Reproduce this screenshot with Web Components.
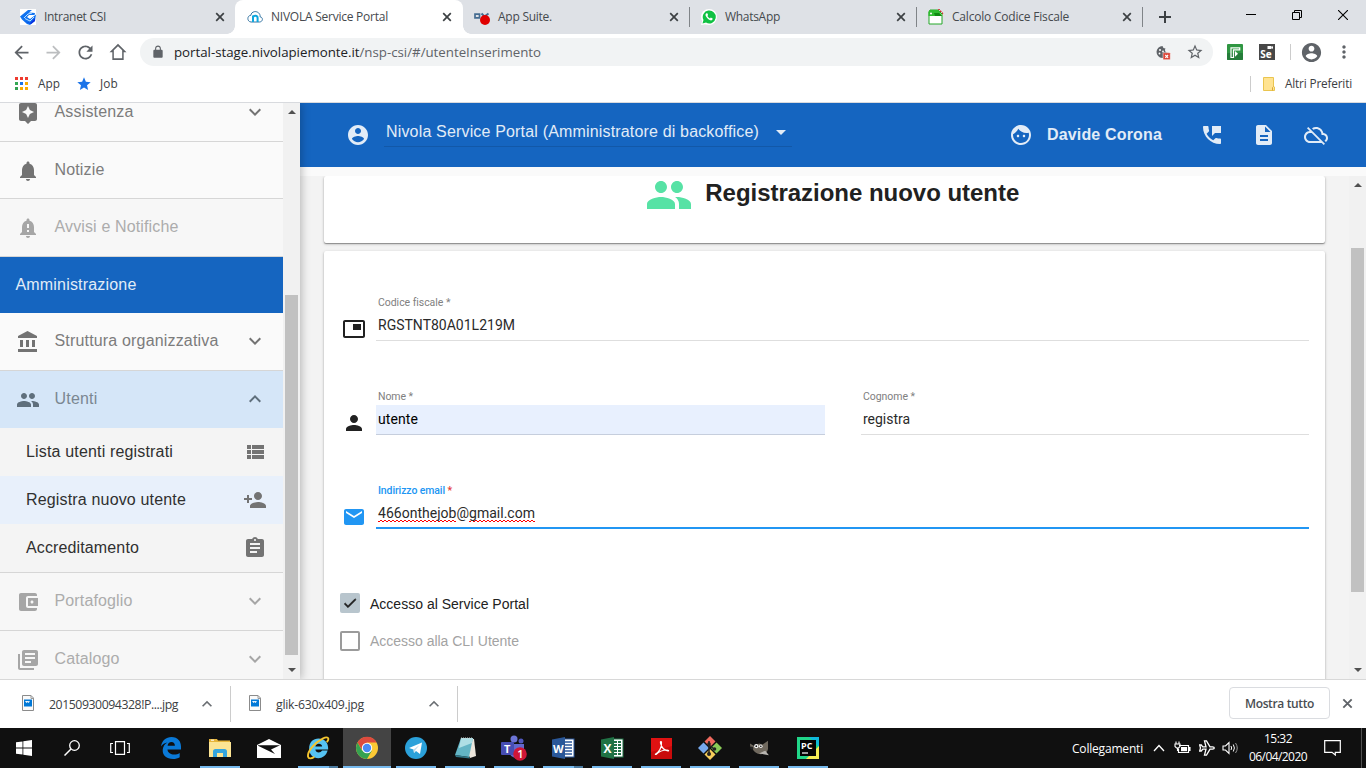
<!DOCTYPE html>
<html lang="it">
<head>
<meta charset="utf-8">
<title>NIVOLA Service Portal</title>
<style>
  html, body { margin: 0; height: 100%; overflow: hidden; background: #fff; }
</style>
</head>
<body>
<desktop-screen></desktop-screen>
<script>
const UI = '"Open Sans", "Noto Sans", sans-serif';
const ARIAL = '"Liberation Sans", Arial, sans-serif';

function def(name, css, html, setup) {
  customElements.define(name, class extends HTMLElement {
    connectedCallback() {
      if (this.shadowRoot) return;
      const root = this.attachShadow({ mode: 'open' });
      const body = typeof html === 'function' ? html(this) : html;
      root.innerHTML = `<style>*{box-sizing:border-box}${css}</style>${body}`;
      if (setup) setup(this, root);
    }
  });
}

const ICONS = {
  assistant: 'M19 2H5c-1.11 0-2 .9-2 2v14c0 1.1.89 2 2 2h4l3 3 3-3h4c1.1 0 2-.9 2-2V4c0-1.1-.9-2-2-2zm-5.12 10.88L12 17l-1.88-4.12L6 11l4.12-1.88L12 5l1.88 4.12L18 11l-4.12 1.88z',
  bell: 'M12 22c1.1 0 2-.9 2-2h-4c0 1.1.89 2 2 2zm6-6v-5c0-3.07-1.64-5.64-4.5-6.32V4c0-.83-.67-1.5-1.5-1.5s-1.5.67-1.5 1.5v.68C7.63 5.36 6 7.92 6 11v5l-2 2v1h16v-1l-2-2z',
  alert: 'M12 22c1.1 0 2-.9 2-2h-4c0 1.1.89 2 2 2zm6-6v-5c0-3.07-1.64-5.64-4.5-6.32V4c0-.83-.67-1.5-1.5-1.5s-1.5.67-1.5 1.5v.68C7.63 5.36 6 7.92 6 11v5l-2 2v1h16v-1l-2-2zm-5 0h-2v-2h2v2zm0-4h-2V8h2v4z',
  bank: 'M4 10v7h3v-7H4zm6 0v7h3v-7h-3zM2 22h19v-3H2v3zm14-12v7h3v-7h-3zm-4.5-9L2 6v2h19V6l-9.5-5z',
  people: 'M16 11c1.66 0 2.99-1.34 2.99-3S17.66 5 16 5c-1.66 0-3 1.34-3 3s1.34 3 3 3zm-8 0c1.66 0 2.99-1.34 2.99-3S9.66 5 8 5C6.34 5 5 6.34 5 8s1.34 3 3 3zm0 2c-2.33 0-7 1.17-7 3.5V19h14v-2.5c0-2.33-4.67-3.5-7-3.5zm8 0c-.29 0-.62.02-.97.05 1.16.84 1.97 1.97 1.97 3.45V19h6v-2.5c0-2.33-4.67-3.5-7-3.5z',
  list: 'M4 14h4v-4H4v4zm0 5h4v-4H4v4zM4 9h4V5H4v4zm5 5h12v-4H9v4zm0 5h12v-4H9v4zM9 5v4h12V5H9z',
  addperson: 'M15 12c2.21 0 4-1.79 4-4s-1.79-4-4-4-4 1.79-4 4 1.79 4 4 4zm-9-2V7H4v3H1v2h3v3h2v-3h3v-2H6zm9 4c-2.67 0-8 1.34-8 4v2h16v-2c0-2.66-5.33-4-8-4z',
  assignment: 'M19 3h-4.18C14.4 1.84 13.3 1 12 1c-1.3 0-2.4.84-2.82 2H5c-1.1 0-2 .9-2 2v14c0 1.1.9 2 2 2h14c1.1 0 2-.9 2-2V5c0-1.1-.9-2-2-2zm-7 0c.55 0 1 .45 1 1s-.45 1-1 1-1-.45-1-1 .45-1 1-1zm2 14H7v-2h7v2zm3-4H7v-2h10v2zm0-4H7V7h10v2z',
  wallet: 'M21 18v1c0 1.1-.9 2-2 2H5c-1.11 0-2-.9-2-2V5c0-1.1.89-2 2-2h14c1.1 0 2 .9 2 2v1h-9c-1.11 0-2 .9-2 2v8c0 1.1.89 2 2 2h9zm-9-2h10V8H12v8zm4-2.5c-.83 0-1.5-.67-1.5-1.5s.67-1.5 1.5-1.5 1.5.67 1.5 1.5-.67 1.5-1.5 1.5z',
  books: 'M4 6H2v14c0 1.1.9 2 2 2h14v-2H4V6zm16-4H8c-1.1 0-2 .9-2 2v12c0 1.1.9 2 2 2h12c1.1 0 2-.9 2-2V4c0-1.1-.9-2-2-2zm-1 9H9V9h10v2zm-4 4H9v-2h6v2zm4-8H9V5h10v2z',
  more: 'M16.59 8.59L12 13.17 7.41 8.59 6 10l6 6 6-6z',
  less: 'M12 8l-6 6 1.41 1.41L12 10.83l4.59 4.58L18 14z',
  account: 'M12 2C6.48 2 2 6.48 2 12s4.48 10 10 10 10-4.48 10-10S17.52 2 12 2zm0 3c1.66 0 3 1.34 3 3s-1.34 3-3 3-3-1.34-3-3 1.34-3 3-3zm0 14.2c-2.5 0-4.71-1.28-6-3.22.03-1.99 4-3.08 6-3.08 1.99 0 5.97 1.09 6 3.08-1.29 1.94-3.5 3.22-6 3.22z',
  face: 'M9 11.75c-.69 0-1.25.56-1.25 1.25s.56 1.25 1.25 1.25 1.25-.56 1.25-1.25-.56-1.25-1.25-1.25zm6 0c-.69 0-1.25.56-1.25 1.25s.56 1.25 1.25 1.25 1.25-.56 1.25-1.25-.56-1.25-1.25-1.25zM12 2C6.48 2 2 6.48 2 12s4.48 10 10 10 10-4.48 10-10S17.52 2 12 2zm0 18c-4.41 0-8-3.59-8-8 0-.29.02-.58.05-.86 2.36-1.05 4.23-2.98 5.21-5.37C11.07 8.33 14.05 10 17.42 10c.78 0 1.53-.09 2.25-.26.21.71.33 1.47.33 2.26 0 4.41-3.59 8-8 8z',
  phone: 'M20 15.5c-1.25 0-2.45-.2-3.57-.57-.35-.11-.74-.03-1.02.24l-2.2 2.2c-2.83-1.44-5.15-3.75-6.59-6.58l2.2-2.21c.28-.27.36-.66.25-1.01C8.7 6.45 8.5 5.25 8.5 4c0-.55-.45-1-1-1H4c-.55 0-1 .45-1 1 0 9.39 7.61 17 17 17 .55 0 1-.45 1-1v-3.5c0-.55-.45-1-1-1zM12 3v10l3-3h6V3h-9z',
  doc: 'M14 2H6c-1.1 0-1.99.9-1.99 2L4 20c0 1.1.89 2 1.99 2H18c1.1 0 2-.9 2-2V8l-6-6zm2 16H8v-2h8v2zm0-4H8v-2h8v2zm-3-5V3.5L18.5 9H13z',
  cloudoff: 'M19.35 10.04C18.67 6.59 15.64 4 12 4c-1.48 0-2.85.43-4.01 1.17l1.46 1.46C10.21 6.23 11.08 6 12 6c3.04 0 5.5 2.46 5.5 5.5v.5H19c1.66 0 3 1.34 3 3 0 1.13-.64 2.11-1.56 2.62l1.45 1.45C23.16 18.16 24 16.68 24 15c0-2.64-2.05-4.78-4.65-4.96zM3 5.27l2.75 2.74C2.56 8.15 0 10.77 0 14c0 3.31 2.69 6 6 6h11.73l2 2L21 20.73 4.27 4 3 5.27zM7.73 10l8 8H6c-2.21 0-4-1.79-4-4s1.79-4 4-4h1.73z',
  pip: 'M19 7h-8v6h8V7zm2-4H3c-1.1 0-2 .9-2 2v14c0 1.1.9 1.98 2 1.98h18c1.1 0 2-.88 2-1.98V5c0-1.1-.9-2-2-2zm0 16.01H3V4.98h18v14.03z',
  person: 'M12 12c2.21 0 4-1.79 4-4s-1.79-4-4-4-4 1.79-4 4 1.79 4 4 4zm0 2c-2.67 0-8 1.34-8 4v2h16v-2c0-2.66-5.33-4-8-4z',
  email: 'M20 4H4c-1.1 0-1.99.9-1.99 2L2 18c0 1.1.9 2 2 2h16c1.1 0 2-.9 2-2V6c0-1.1-.9-2-2-2zm0 4l-8 5-8-5V6l8 5 8-5v2z',
  dropdown: 'M7 10l5 5 5-5z',
  back: 'M20 11H7.83l5.59-5.59L12 4l-8 8 8 8 1.41-1.41L7.83 13H20v-2z',
  forward: 'M12 4l-1.41 1.41L16.17 11H4v2h12.17l-5.58 5.59L12 20l8-8z',
  reload: 'M17.65 6.35C16.2 4.9 14.21 4 12 4c-4.42 0-7.99 3.58-7.99 8s3.57 8 7.99 8c3.73 0 6.84-2.55 7.73-6h-2.08c-.82 2.33-3.04 4-5.65 4-3.31 0-6-2.69-6-6s2.69-6 6-6c1.66 0 3.14.69 4.22 1.78L13 11h7V4l-2.35 2.35z',
  home: 'M12 2.2L1.8 12.2H5.2V21.6H18.8V12.2H22.2ZM12 5L17 9.9V19.6H7V9.9Z',
  lock: 'M18 8h-1V6c0-2.76-2.24-5-5-5S7 3.24 7 6v2H6c-1.1 0-2 .9-2 2v10c0 1.1.9 2 2 2h12c1.1 0 2-.9 2-2V10c0-1.1-.9-2-2-2zM8.9 6c0-1.71 1.39-3.1 3.1-3.1s3.1 1.39 3.1 3.1v2H8.9V6z',
  staro: 'M22 9.24l-7.19-.62L12 2 9.19 8.63 2 9.24l5.46 4.73L5.82 21 12 17.27 18.18 21l-1.63-7.03L22 9.24zM12 15.4l-3.76 2.27 1-4.28-3.32-2.88 4.38-.38L12 6.1l1.71 4.04 4.38.38-3.32 2.88 1 4.28L12 15.4z',
  star: 'M12 17.27L18.18 21l-1.64-7.03L22 9.24l-7.19-.61L12 2 9.19 8.63 2 9.24l5.46 4.73L5.82 21z',
  dots: 'M12 8c1.1 0 2-.9 2-2s-.9-2-2-2-2 .9-2 2 .9 2 2 2zm0 2c-1.1 0-2 .9-2 2s.9 2 2 2 2-.9 2-2-.9-2-2-2zm0 6c-1.1 0-2 .9-2 2s.9 2 2 2 2-.9 2-2-.9-2-2-2z',
  check: 'M9 16.17L4.83 12l-1.42 1.41L9 19 21 7l-1.41-1.41z'
};

/* Multi-colour artwork: [viewBox, markup] */
const ART = {
  csi: ['0 0 16 16', '<rect width="16" height="16" fill="#fff"/><path d="M0 7.500L8 1h4L9 3.500l6 .5-.5 2-5.500 0-2 2 3 2 6-4.500-1 6.500-5 4-3-1-5-4.500z" fill="#1173f0"/><path d="M4 9l4-4 4-1M5 9.500l5 2.500 4-4" stroke="#bfe2ff" stroke-width="1" fill="none"/><path d="M4 12l6 2 5-5v3l-4 3z" fill="#0a2fe0"/>'],
  nivola: ['0 0 16 16', '<path d="M4 13h8.500c3.500-.2 4-4.600.6-5.200C13.500 4.500 10.500 2.400 7.800 2.600 5.200 3 4 4.500 3.900 6.300 0 6.400-.3 12.600 4 13z" fill="#fff" stroke="#3676a3" stroke-width="1"/><path d="M6 13V6.500M6 8.500c.5-2.400 4.600-2.200 4.600.5v4" fill="none" stroke="#0fa7de" stroke-width="2"/>'],
  ox: ['0 0 16 16', '<path d="M1 5.200h4.500v3.600H1z" fill="none" stroke="#456c91" stroke-width="1.700"/><path d="M7.500 4.500l3 3 4-3" fill="none" stroke="#456c91" stroke-width="2"/><circle cx="11" cy="11" r="5" fill="#e00000"/>'],
  whats: ['0 0 16 16', '<circle cx="8" cy="8" r="8" fill="#fff"/><path d="M0 16l1.500-5L6 15z" fill="#fff"/><path d="M1.500 14.500l1-3.500A6.500 6.500 0 1 1 5 13.600z" fill="#10c143"/><path d="M5.500 4.300c-1 .5-1.400 1.700-.4 3.300 1.200 2.200 3.300 3.800 5 3.800 1.500-.2 1.700-1.400 1.500-1.900L9.800 8.600 9 9.500C7.900 9.100 7 8.200 6.400 7l.7-1-.8-1.800z" fill="#fff"/>'],
  calc: ['0 0 16 16', '<path d="M10 0l6 5v2H9z" fill="#f3dcdc"/><path d="M10.500 0L15 5" stroke="#c22" stroke-width="1.500" stroke-dasharray="1.500 1"/><path d="M1 3l1-2h8l4 4v10H1z" fill="#fff" stroke="#24a829" stroke-width="1"/><path d="M.5 3l1-2h9l3.700 6H.5z" fill="#2fbc30"/><path d="M6 4h5l3 3H7z" fill="#108b12"/><circle cx="3" cy="4.500" r="1" fill="#fff"/>'],
  cookie: ['0 0 16 16', '<path d="M13.500 8.500A6 6 0 1 1 7.500 2a3 3 0 0 0 3 2.500 2.600 2.600 0 0 0 3 4z" fill="#5f6368"/><circle cx="5" cy="6" r="1" fill="#fff"/><circle cx="8" cy="7.500" r=".9" fill="#fff"/><circle cx="4.500" cy="9.500" r=".9" fill="#fff"/><rect x="8" y="8.700" width="7.300" height="7" rx=".6" fill="#db4437" stroke="#fff" stroke-width=".5"/><path d="M10.300 11l2.800 2.800m0-2.800l-2.800 2.800" stroke="#fff" stroke-width="1.100"/>'],
  greenext: ['0 0 16 16', '<rect width="16" height="16" rx="1" fill="#2f9642"/><rect y="9" width="16" height="7" rx="1" fill="#257c3a"/><path d="M4 13.500V3.800h8.700v2H6.500v7.700z" fill="none" stroke="#fff" stroke-width="1.200"/><path d="M8 7l3 2.700-3 3z" fill="#fff"/>'],
  se: ['0 0 16 16', '<rect width="16" height="16" fill="#474747"/><rect x="8.500" y="2" width="4" height="3" fill="#fff"/><path d="M12 3.500l2-1.500v3z" fill="#fff"/><text x="1.200" y="14" font-family="Open Sans" font-weight="700" font-size="10" fill="#fff">Se</text>'],
  apps: ['0 0 13 13', '<path d="M0 0h3v3H0zM5 0h3v3H5zM10 0h3v3h-3z" fill="#ee3b2f"/><path d="M0 5h3v3H0z" fill="#34a853"/><path d="M5 5h3v3H5z" fill="#1a73e8"/><path d="M10 5h3v3h-3zM5 10h3v3H5zM10 10h3v3h-3z" fill="#f9ab00"/><path d="M0 10h3v3H0z" fill="#34a050"/>'],
  folder: ['0 0 12 14', '<path d="M.5.5h10v9l1 .5v3.500H.500z" fill="#ffe391" stroke="#eac54f"/><path d="M9.500 13.500v-3l1-1" stroke="#d9a93a" fill="none"/>'],
  img: ['0 0 12 16', '<path d="M.5.500h8.500l2.500 2.500v12.500H.5z" fill="#fafafa" stroke="#8b8b8b"/><path d="M9 .5v3h2.500" fill="none" stroke="#9a9a9a"/><rect x="2" y="4.500" width="8" height="7" fill="#0078d7"/><path d="M3 6l1.500 2 1-1 1 1L8 6.300z" fill="#fff"/>'],
  win: ['0 0 16 16', '<path d="M0 2.300L6.500 1.400V7.600H0zM7.300 1.300L16 0V7.600H7.300zM0 8.400H6.500V14.600L0 13.700zM7.300 8.400H16V16L7.300 14.700z" fill="#fff"/>'],
  search: ['0 0 16 16', '<circle cx="10.500" cy="5.500" r="4.800" fill="none" stroke="#fff" stroke-width="1.300"/><path d="M7 9L.5 15.500" stroke="#fff" stroke-width="1.500"/>'],
  taskview: ['0 0 20 14', '<path d="M5.500.700h9v12.600h-9zM3 2.500H.700v9H3M17 2.500h2.300v9H17" fill="none" stroke="#fff" stroke-width="1.200"/>'],
  edge: ['0 0 20 22', '<path d="M0 9.500C1 3.500 5 0 10.500 0 17 0 20 4.500 20 9.500v3H6.500c.2 3.500 3.500 5 6.500 5 2.300 0 4.200-.6 5.700-1.600v4.300C17 21.300 14.600 22 12 22 5.500 22 1.500 18.500 1.700 13c.1-3.300 2-6 4.800-7.500C3.800 5.800 1.400 7.300 0 9.500zm6.600-.8h7.300c0-2.200-1.300-3.700-3.400-3.700-2.200 0-3.700 1.500-3.900 3.700z" fill="#0a79d7"/>'],
  explorer: ['0 0 22 18', '<path d="M0 0h8l1 1.500h12V17H0z" fill="#e7b53a"/><path d="M0 3h22V18H0z" fill="#fce493"/><path d="M4 18v-5.500Q4 10 6.500 10h9Q18 10 18 12.500V18h-4v-4H8v4z" fill="#35a5de"/><path d="M2 1.200h3" stroke="#fff"/>'],
  mail: ['0 0 24 19', '<path d="M0 6L12 0l12 6v13H0z" fill="#fff"/><path d="M1 6.200h22L14 10.500l4 4.500L1 6.800z" fill="#111"/>'],
  ie: ['0 0 24 24', '<path d="M3 12C3 6 7 2.500 12 2.500c6 0 9.500 4 9.300 10.500H9c.2 3 4.500 4 6.500 1h5.300c-1.500 5-5 7.300-9 7.300C7 21.300 3 18 3 12zm6-2h6.500c-.2-3.500-6-3.500-6.500 0z" fill="#56c3f2"/><path d="M20 6C23 2 21 0 16 2.500 8 6.500 1 15 2 20c.6 2.500 3.500 1.500 6 0" fill="none" stroke="#f5c52e" stroke-width="1.800"/>'],
  chrome: ['0 0 24 24', '<circle cx="12" cy="12" r="11" fill="#fcc934"/><path d="M12 6.500h9.700A11 11 0 0 0 2.500 6.500L7 14z" fill="#dd4b3e"/><path d="M2.500 6.500A11 11 0 0 0 12 23l4.800-8.300L7 14.500z" fill="#35a251"/><circle cx="12" cy="12" r="5.200" fill="#fff"/><circle cx="12" cy="12" r="4.200" fill="#4a8af4"/>'],
  telegram: ['0 0 22 22', '<circle cx="11" cy="11" r="11" fill="#2ba1da"/><path d="M4 11L17 5.500 15 17l-4-3-2 2-.5-3.500z" fill="#fff"/><path d="M8.500 12.500L14.500 8 10.500 13 9 16z" fill="#c3dcec"/>'],
  notepad: ['0 0 22 22', '<path d="M7 1l13 1 2 17-6 2z" fill="#ece6dc"/><path d="M7 1h12l-4 19L1 18z" fill="#63b5c5"/><path d="M7 1h12l-1 5-13 5z" fill="#aedfe5"/><path d="M1 18l14 2 1 1.500L2 20z" fill="#317889"/><path d="M7 1h12" stroke="#ccc" stroke-dasharray="1 1"/>'],
  teams: ['0 0 26 26', '<circle cx="13" cy="4" r="3.500" fill="#6c74d6"/><circle cx="20" cy="6" r="2.500" fill="#5158bd"/><path d="M8 9h15v8q-2 6-8 6-6-1-7-6z" fill="#6269ce"/><rect y="7" width="13" height="13" rx="1" fill="#464db3"/><text x="3" y="17.500" font-family="Open Sans" font-weight="700" font-size="11" fill="#fff">T</text><circle cx="19" cy="19" r="6.800" fill="#cf1637"/><text x="16.300" y="23" font-family="Open Sans" font-weight="600" font-size="11" fill="#fff">1</text>'],
  word: ['0 0 24 24', '<rect x="12" y="3" width="11" height="18" fill="#fff" stroke="#2b579a"/><path d="M14 6h7M14 9h7M14 12h7M14 15h7M14 18h7" stroke="#2b579a" stroke-width="1.300"/><path d="M1 3.500L14 1v22L1 20.500z" fill="#2a5798"/><text x="2" y="16.500" font-family="Open Sans" font-weight="700" font-size="11" fill="#fff">W</text>'],
  excel: ['0 0 24 24', '<rect x="12" y="3" width="11" height="18" fill="#fff" stroke="#217346"/><path d="M14 6h7M14 9h7M14 12h7M14 15h7M14 18h7" stroke="#217346" stroke-width="1.800" stroke-dasharray="3 1"/><path d="M1 3.500L14 1v22L1 20.500z" fill="#207245"/><text x="3.500" y="16.500" font-family="Open Sans" font-weight="700" font-size="12" fill="#fff">X</text>'],
  pdf: ['0 0 21 21', '<rect width="21" height="21" fill="#c90b0b"/><path d="M0 0h21v8L0 14z" fill="#e01212"/><path d="M4 16.500c4-2 7-7 6.500-12 0-1.500-1.500-1-1 .5 1 4 4 7.500 7.500 8 1 0 .8-1-1-1-4 0-8 1.500-11 4.500z" fill="none" stroke="#fff" stroke-width="1.200"/>'],
  git: ['0 0 24 24', '<path d="M12 0l5.500 5.500L12 11 6.500 5.500z" fill="#f06a5f"/><path d="M5.500 6.500L11 12l-5.500 5.500L0 12z" fill="#77a9ee"/><path d="M18.500 6.500L24 12l-5.500 5.500L13 12z" fill="#8acb57"/><path d="M12 13l5.500 5.500L12 24l-5.500-5.500z" fill="#f6cd5b"/><path d="M11 5v12M11 9l5 4" stroke="#222" stroke-width="1.500"/><circle cx="11" cy="18" r="2" fill="#222"/><circle cx="16.500" cy="13" r="1.800" fill="#222"/><circle cx="11" cy="8" r="1.800" fill="#222"/>'],
  gimp: ['0 0 24 20', '<path d="M2 5l5 3 5-3 4 1 6-4v9q-1 6-8 6-7-1-9-6-3-1-3-6z" fill="#70695e"/><circle cx="9" cy="8" r="2.400" fill="#f2f2f2"/><circle cx="14" cy="8" r="2" fill="#eee"/><circle cx="9" cy="8" r="1" fill="#111"/><circle cx="14" cy="8" r=".9" fill="#111"/><path d="M12 16l7-3 4 5z" fill="#b9b6b1"/><circle cx="4" cy="10" r="1.700" fill="#222"/>'],
  pycharm: ['0 0 22 22', '<rect width="22" height="22" fill="#21d789"/><path d="M12 0h10v10z" fill="#0fb9dc"/><path d="M22 9v13H9z" fill="#f6ec54"/><rect x="3" y="3" width="16" height="16" fill="#050505"/><text x="4" y="12" font-family="Open Sans" font-weight="700" font-size="9" fill="#fff">PC</text><path d="M5 16h6" stroke="#fff" stroke-width="1.200"/>'],
  caret: ['0 0 12 8', '<path d="M1 7l5-5.500L11 7" fill="none" stroke="#fff" stroke-width="1.300"/>'],
  battery: ['0 0 17 14', '<path d="M5 4.500h9.500v7H4.500v-4" fill="none" stroke="#fff" stroke-width="1.200"/><rect x="7" y="6" width="6" height="4.200" fill="#fff"/><path d="M15 6.500h1v3H15zM1 3h5v2.500L4.500 7h-2L1 5.500zM2 .5V3M5 .5V3M3.500 7v3" fill="none" stroke="#fff" stroke-width="1.100"/>'],
  plane: ['0 0 16 16', '<path d="M.7 5h1.600l1.500 1.800H7L5.500.800h2L11 6.800h2.500q1.800.2 1.800 1.200t-1.800 1.200H11L7.500 15.200h-2L7 9.200H3.800L2.300 11H.7l.8-3z" fill="none" stroke="#fff" stroke-width="1.300"/>'],
  speaker: ['0 0 17 14', '<path d="M1 5h2.500L7 1.500v11L3.500 9H1z" fill="none" stroke="#fff" stroke-width="1.100"/><path d="M9 5q1.300 2 0 4M11.300 3.500q2.200 3.500 0 7" fill="none" stroke="#fff" stroke-width="1"/><path d="M13.500 2q3.500 5 0 10" fill="none" stroke="#999" stroke-width="1"/>'],
  notif: ['0 0 17 16', '<path d="M.7.700h15.600v11.600h-5V15L8 12.300H.7z" fill="none" stroke="#fff" stroke-width="1.200"/>'],
  min: ['0 0 10 10', '<path d="M0 4.500h10" stroke="#000"/>'],
  restore: ['0 0 10 10', '<path d="M.5 2.500h7v7h-7zM2.500 2.500v-2h7v7h-2" fill="none" stroke="#000"/>'],
  wclose: ['0 0 10 10', '<path d="M0 0l10 10M10 0L0 10" stroke="#000" stroke-width="1.100"/>'],
  tabclose: ['0 0 10 10', '<path d="M1.200 1.200l7.600 7.600M8.800 1.200L1.200 8.800" stroke="currentColor" stroke-width="1.700"/>'],
  add: ['0 0 12 12', '<path d="M6 0v12M0 6h12" stroke="currentColor" stroke-width="2"/>'],
  up: ['0 0 8 4', '<path d="M0 4h8L4 0z" fill="#505050"/>'],
  down: ['0 0 8 4', '<path d="M0 0h8L4 4z" fill="#505050"/>']
};

/* Sizes: w/h in pixels; x = space before the glyph in its row */
def('ui-icon', ':host{display:block;flex:none}svg{display:block}', el => {
  const n = el.getAttribute('name'), w = el.getAttribute('w') || 24, h = el.getAttribute('h') || w;
  const a = ART[n] || ['0 0 24 24', `<path fill="currentColor" d="${ICONS[n]}"/>`];
  el.style.marginLeft = (el.getAttribute('x') || 0) + 'px';
  return `<svg width="${w}" height="${h}" viewBox="${a[0]}">${a[1]}</svg>`;
});

/* One line of text, tracked so that it fills exactly w pixels */
def('fit-text', ':host{display:block;flex:none;white-space:nowrap}span{display:inline-block}', '<span><slot></slot></span>', (el, root) => {
  const w = +el.getAttribute('w');
  el.style.marginLeft = (el.getAttribute('x') || 0) + 'px';
  if (!w) return;
  const s = root.querySelector('span'), n = el.textContent.length;
  s.style.letterSpacing = ((w - s.getBoundingClientRect().width) / n) + 'px';
  el.style.width = w + 'px';
});

def('browser-tab', `
  :host{display:flex;align-items:center;width:227px;height:34px;position:relative;flex:none;color:#45494d;font:12px ${UI};box-sizing:border-box}
  .fav{padding-left:11px}.title{margin-left:8px;flex:1;padding-bottom:1px}.x{margin-right:10px;color:#3c4043}
  .sep{width:1px;height:20px;background:#808488}
  :host(:not([sep])) .sep{background:none}
  :host([active]){background:#fff;border-radius:8px 8px 0 0;width:228px;margin-left:-1px;padding-left:1px}
  :host([active])::before,:host([active])::after{content:"";position:absolute;bottom:0;width:8px;height:8px}
  :host([active])::before{left:-8px;background:radial-gradient(circle at 0 0,transparent 7.5px,#fff 8px)}
  :host([active])::after{right:-8px;background:radial-gradient(circle at 100% 0,transparent 7.5px,#fff 8px)}`,
  el => `<ui-icon class="fav" name="${el.getAttribute('icon')}" w="16"></ui-icon>
  <div class="title"><fit-text w="${el.getAttribute('w')}">${el.getAttribute('label')}</fit-text></div>
  <ui-icon class="x" name="tabclose" w="10"></ui-icon><div class="sep"></div>`);

def('tab-strip', `:host{display:flex;align-items:center;height:34px;padding-left:9px;background:#dee1e6;color:#3c4043}
  .win{display:flex;align-items:center;margin-top:-5px}`, `
  <browser-tab icon="csi" label="Intranet CSI" w="62"></browser-tab>
  <browser-tab active icon="nivola" label="NIVOLA Service Portal" w="117"></browser-tab>
  <browser-tab sep icon="ox" label="App Suite." w="54"></browser-tab>
  <browser-tab sep icon="whats" label="WhatsApp" w="55"></browser-tab>
  <browser-tab sep icon="calc" label="Calcolo Codice Fiscale" w="117" style="width:226px"></browser-tab>
  <ui-icon name="add" w="12" x="16"></ui-icon>
  <div class="win"><ui-icon name="min" w="10" x="75"></ui-icon><ui-icon name="restore" w="10" x="36"></ui-icon><ui-icon name="wclose" w="10" x="36"></ui-icon></div>`);

def('tool-bar', `:host{display:flex;align-items:center;height:36px;color:#5f6368;font:14px ${UI}}
  .omni{display:flex;align-items:center;width:1073px;height:28px;border-radius:14px;background:#f1f3f4;margin-left:12px}
  .grow{flex:1}.sep{width:1px;height:16px;background:#ccc;margin-left:15px}b{font-weight:400;color:#202124}`, `
  <ui-icon name="back" w="21" x="11"></ui-icon><ui-icon name="forward" w="21" x="11" style="color:#bcbec0"></ui-icon>
  <ui-icon name="reload" w="21" x="11"></ui-icon><ui-icon name="home" w="20" x="12"></ui-icon>
  <div class="omni"><ui-icon name="lock" w="14" x="11"></ui-icon><fit-text w="367" x="9" style="font-size:13.300px"><b>portal-stage.nivolapiemonte.it</b>/nsp-csi/#/utenteInserimento</fit-text>
  <div class="grow"></div><ui-icon name="cookie" w="16"></ui-icon><ui-icon name="staro" w="18" x="15" style="padding-right:9px"></ui-icon></div>
  <ui-icon name="greenext" w="16" x="14"></ui-icon><ui-icon name="se" w="16" x="16"></ui-icon><div class="sep"></div>
  <ui-icon name="account" w="23" x="9"></ui-icon><ui-icon name="dots" w="20" x="11"></ui-icon>`);

def('bookmark-bar', `:host{display:flex;align-items:center;height:33px;padding-bottom:5px;border-bottom:1px solid #d8dade;box-sizing:border-box;color:#3c4043;font:11.800px ${UI}}
  fit-text{margin-top:-1px}
  .sep{margin-left:auto;width:1px;height:16px;background:#ccc}`, `
  <ui-icon name="apps" w="13" x="15"></ui-icon><fit-text w="22" x="10">App</fit-text>
  <ui-icon name="star" w="16" x="16" style="color:#1a73e8"></ui-icon><fit-text w="18" x="8">Job</fit-text>
  <div class="sep"></div><ui-icon name="folder" w="12" h="14" x="12"></ui-icon><fit-text w="67" x="10" style="margin-right:14px">Altri Preferiti</fit-text>`);

def('nav-item', `
  :host{display:flex;align-items:center;padding-bottom:2px;flex:none;border-bottom:1px solid #d6d6d6;font:16px ${ARIAL};color:#7c7c7c;background:#fafafa;box-sizing:border-box;height:58px}
  .i{margin-top:2px;color:#737373}.t{flex:1;margin-left:14.500px}.c{margin-right:16px;color:#737373}
  :host([off]){background:#f7f7f7;color:#acacac}
  :host([off]) .i,:host([off]) .c{color:#a6a6a6}
  :host([sub]){height:48px;border:0;background:#f4f4f4;padding-bottom:0}
  :host([sub]) .t{margin-left:26px;color:#303030}
  :host([sel]){background:#e8f0fb}
  :host([open]){background:#d5e6f8;border-bottom:0;height:57px;color:#7b8792}
  :host([open]) .i,:host([open]) .c{color:#5f6f7c}
  :host([head]){background:#1565c0;border:0;height:56px;color:#e2ecf7;padding-bottom:1px}
  :host([head]) .t{margin-left:15.500px}`,
  el => {
    const g = k => el.getAttribute(k);
    return `${g('icon') ? `<div class="i"><ui-icon name="${g('icon')}" w="24" x="16"></ui-icon></div>` : ''}
    <div class="t"><fit-text w="${g('w')}">${g('label')}</fit-text></div>
    ${g('end') ? `<div class="c"><ui-icon name="${g('end')}" w="24"></ui-icon></div>` : ''}`;
  });

def('scroll-track', `:host{display:flex;flex-direction:column;width:17px;background:#f1f1f1;flex:none;box-sizing:border-box;padding:7px 0 7px}
  .th{width:13px;margin-left:2px;background:#c1c1c1}.g{flex:1}`,
  el => `<ui-icon name="up" w="8" h="4" style="padding-left:4.500px"></ui-icon><div style="height:${el.getAttribute('before')}px"></div>
  <div class="th" style="height:${el.getAttribute('size')}px"></div><div class="g"></div><ui-icon name="down" w="8" h="4" style="padding-left:4.500px"></ui-icon>`);

def('side-nav', `:host{display:flex;width:300px;flex:none;background:#fafafa;box-shadow:1px 0 9px rgba(0,0,0,.28);position:relative;z-index:2}
  .list{width:283px;height:576px;overflow:hidden;display:flex;flex-direction:column}`, `
  <div class="list">
    <nav-item icon="assistant" label="Assistenza" w="79" end="more" style="margin-top:-19px"></nav-item>
    <nav-item icon="bell" label="Notizie" w="50" style="height:57px;padding-bottom:1px"></nav-item>
    <nav-item off icon="alert" label="Avvisi e Notifiche" w="124"></nav-item>
    <nav-item head label="Amministrazione" w="121"></nav-item>
    <nav-item icon="bank" label="Struttura organizzativa" w="164" end="more"></nav-item>
    <nav-item open icon="people" label="Utenti" w="43" end="less"></nav-item>
    <nav-item sub label="Lista utenti registrati" w="147" end="list"></nav-item>
    <nav-item sub sel label="Registra nuovo utente" w="160" end="addperson"></nav-item>
    <nav-item sub label="Accreditamento" w="113" end="assignment" style="height:49px;border-bottom:1px solid #d6d6d6"></nav-item>
    <nav-item off icon="wallet" label="Portafoglio" w="78" end="more"></nav-item>
    <nav-item off icon="books" label="Catalogo" w="65" end="more"></nav-item>
  </div>
  <scroll-track before="181" size="360"></scroll-track>`);

def('app-header', `:host{display:flex;align-items:center;height:64px;flex:none;background:#1565c0;color:#e2ecf7;font:16px ${ARIAL}}
  .sel{display:flex;align-items:center;width:408px;height:30px;margin:-6px 0 0 14px;border-bottom:1px solid #1258a8}
  b{font-weight:700}`, `
  <ui-icon name="account" x="46"></ui-icon>
  <div class="sel"><fit-text w="373" x="2">Nivola Service Portal (Amministratore di backoffice)</fit-text><ui-icon name="dropdown" x="9.500"></ui-icon></div>
  <ui-icon name="face" x="217"></ui-icon><fit-text w="115" x="14"><b>Davide Corona</b></fit-text>
  <ui-icon name="phone" x="38"></ui-icon><ui-icon name="doc" x="28"></ui-icon><ui-icon name="cloudoff" x="28"></ui-icon>`);

def('text-field', `:host{display:block;height:94px;font:14px Roboto,sans-serif;color:#2a2a2a}
  .l{height:18px;line-height:19px;padding:0 0 0 2px;font-size:10.500px;color:#808080}
  .v{display:flex;align-items:center;height:30px;padding:0 0 1px 2px;border-bottom:1px solid #dedede}
  :host([filled]) .v{background:#e8f0fe;border-color:#c6cedd;color:#000}
  :host([focus]) .v{border-bottom:2px solid #2196f3;padding-bottom:0}
  :host([focus]) .l{color:#2196f3;font-weight:500}i{font-style:normal}:host([focus]) i{color:#e53935}
  .sp{padding-bottom:1px;background:repeating-linear-gradient(90deg,#f00 0 2px,transparent 2px 4px) 0 100%/100% 1px no-repeat,repeating-linear-gradient(90deg,transparent 0 2px,#f00 2px 4px) 0 calc(100% - 1px)/100% 1px no-repeat}`,
  el => {
    const g = k => el.getAttribute(k);
    const v = el.hasAttribute('focus') ? g('value').replace(/^(.*)@(.*)$/, '<span class="sp">$1</span>@<span class="sp">$2</span>') : g('value');
    return `<div class="l"><fit-text w="${g('lw')}">${g('label')} <i>*</i></fit-text></div><div class="v"><fit-text w="${g('w')}">${v}</fit-text></div>`;
  });

def('check-row', `:host{display:flex;align-items:center;height:20px;margin-bottom:18px;font:14px ${ARIAL};color:#212121}
  .b{width:20px;height:20px;border:2px solid #9b9b9b;border-radius:2px;margin-right:10px}
  ui-icon{stroke:#212121;stroke-width:1}
  :host([on]) fit-text{padding-top:2px}
  :host([on]) .b{border:0;background:#b8c5cd;padding:2px}:host([off]){color:#a3a3a3}`,
  el => `<div class="b">${el.hasAttribute('on') ? '<ui-icon name="check" w="16"></ui-icon>' : ''}</div><fit-text w="${el.getAttribute('w')}">${el.getAttribute('label')}</fit-text>`);

def('user-form', `:host{display:block;flex:1;min-height:0;overflow:hidden;padding-left:24px}
  .card{width:1001px;background:#fff;border-radius:2px;box-shadow:0 1px 3px rgba(0,0,0,.25),0 1px 1px rgba(0,0,0,.3)}
  .head{display:flex;align-items:center;height:67px;margin-bottom:8px;font:700 24px ${ARIAL};color:#212121}
  .head>*{margin-top:-29px}.head .tx{margin-top:-33px}
  .form{height:500px;padding:42px 16px 0}
  .row{display:grid;grid-template-columns:24px 1fr;column-gap:10px;padding-left:2px;color:#212121}
  .ic{padding-top:24px}.two{display:grid;grid-template-columns:449px 448px;column-gap:36px}
  .checks{padding-top:18px}`, `
  <div class="card head"><ui-icon name="people" w="48" x="321.300" style="color:#57e2a5"></ui-icon><div class="tx"><fit-text w="314" x="12">Registrazione nuovo utente</fit-text></div></div>
  <div class="card form">
    <div class="row"><div class="ic"><ui-icon name="pip"></ui-icon></div><text-field label="Codice fiscale" lw="72" value="RGSTNT80A01L219M" w="137"></text-field></div>
    <div class="row"><div class="ic"><ui-icon name="person"></ui-icon></div><div class="two"><text-field filled label="Nome" lw="35" value="utente" w="40"></text-field><text-field label="Cognome" lw="52" value="registra" w="47"></text-field></div></div>
    <div class="row"><div class="ic"><ui-icon name="email" style="color:#2196f3"></ui-icon></div><text-field focus label="Indirizzo email" lw="74" value="466onthejob@gmail.com" w="157"></text-field></div>
    <div class="checks"><check-row on label="Accesso al Service Portal" w="159"></check-row><check-row off label="Accesso alla CLI Utente" w="149"></check-row></div>
  </div>`);

def('portal-page', `:host{display:flex;height:576px;background:#f3f3f3;overflow:hidden}
  main{flex:1;display:flex;flex-direction:column;min-width:0}.gap{height:9px;flex:none;background:#fafafa}
  .body{display:flex;flex:1;min-height:0}`, `
  <side-nav></side-nav><main><app-header></app-header><div class="gap"></div>
  <div class="body"><user-form></user-form><scroll-track before="61" size="344"></scroll-track></div></main>`);

def('download-item', `:host{display:flex;align-items:center;height:36px;border-right:1px solid #ccc;box-sizing:border-box;font:12.300px ${UI};color:#3c4043}.f{margin-top:-2px}.c{margin-left:auto;padding-right:13px;color:#6a6e72}`,
  el => `<div class="f"><ui-icon name="img" w="12" h="16" style="padding-left:${el.getAttribute('pad')}px"></ui-icon></div><fit-text w="${el.getAttribute('w')}" x="15">${el.getAttribute('label')}</fit-text><div class="c"><ui-icon name="less" w="20"></ui-icon></div>`);

def('download-bar', `:host{display:flex;align-items:center;height:49px;border-top:1px solid #d8d8d8;box-sizing:border-box;background:#fff;color:#5f6368;font:600 12px ${UI}}
  .btn{display:flex;align-items:center;width:101px;height:32px;border:1px solid #dadce0;border-radius:4px;margin-left:auto;color:#4a4e52;margin-top:-2px}
  .x{padding-right:13px;margin-top:-2px}`, `
  <download-item pad="22" label="20150930094328!P....jpg" w="129" style="width:231px"></download-item>
  <download-item pad="18" label="glik-630x409.jpg" w="88" style="width:227px"></download-item>
  <div class="btn"><fit-text w="69" x="15">Mostra tutto</fit-text></div><div class="x"><ui-icon name="tabclose" w="11" x="12"></ui-icon></div>`);

def('task-cell', `:host{display:flex;align-items:center;justify-content:center;width:48px;height:40px;flex:none;position:relative;margin-right:1px}
  :host([run])::after{content:"";position:absolute;left:4px;right:4px;bottom:0;height:2px;background:#76b9ed}
  :host([active]){background:#444}:host([active])::after{left:0;right:0}
  :host([many])::after{background:linear-gradient(90deg,#76b9ed 31px,#4c7ba0 31px)}`,
  el => `<ui-icon name="${el.getAttribute('icon')}" w="${el.getAttribute('w')}" h="${el.getAttribute('h') || el.getAttribute('w')}"></ui-icon>`);

def('task-bar', `:host{display:flex;align-items:center;height:40px;background:#101010;color:#fff;font:12px ${UI}}
  .tray{display:flex;align-items:center;margin-left:auto}.clock{margin-left:9px;width:60px;line-height:18px;display:flex;flex-direction:column;align-items:center}
  .end{width:1px;height:40px;background:#505050;margin:0 4px 0 20px}`, `
  <task-cell icon="win" w="16" style="margin-right:0"></task-cell><task-cell icon="search" w="16" style="margin-right:0"></task-cell><task-cell icon="taskview" w="20" h="14" style="margin-right:3px"></task-cell>
  <task-cell icon="edge" w="20" h="22"></task-cell><task-cell run icon="explorer" w="22" h="18"></task-cell><task-cell icon="mail" w="24" h="19"></task-cell>
  <task-cell run many icon="ie" w="25"></task-cell><task-cell run active icon="chrome" w="24"></task-cell><task-cell run icon="telegram" w="22"></task-cell>
  <task-cell run icon="notepad" w="22"></task-cell><task-cell run icon="teams" w="26"></task-cell><task-cell run many icon="word" w="24"></task-cell>
  <task-cell run icon="excel" w="24"></task-cell><task-cell run icon="pdf" w="21"></task-cell><task-cell run icon="git" w="24"></task-cell>
  <task-cell run icon="gimp" w="22" h="18"></task-cell><task-cell run icon="pycharm" w="22"></task-cell>
  <div class="tray"><fit-text w="71">Collegamenti</fit-text><ui-icon name="caret" w="12" h="8" x="10"></ui-icon><ui-icon name="battery" w="17" h="14" x="9"></ui-icon>
  <ui-icon name="plane" w="16" x="8"></ui-icon><ui-icon name="speaker" w="17" h="14" x="7"></ui-icon>
  <div class="clock"><fit-text w="28">15:32</fit-text><fit-text w="58">06/04/2020</fit-text></div>
  <ui-icon name="notif" w="17" h="16" x="16"></ui-icon><div class="end"></div></div>`);

def('desktop-screen', ':host{display:flex;flex-direction:column;width:1366px;height:768px;overflow:hidden;background:#fff}',
  '<tab-strip></tab-strip><tool-bar></tool-bar><bookmark-bar></bookmark-bar><portal-page></portal-page><download-bar></download-bar><task-bar></task-bar>');
</script>
</body>
</html>
